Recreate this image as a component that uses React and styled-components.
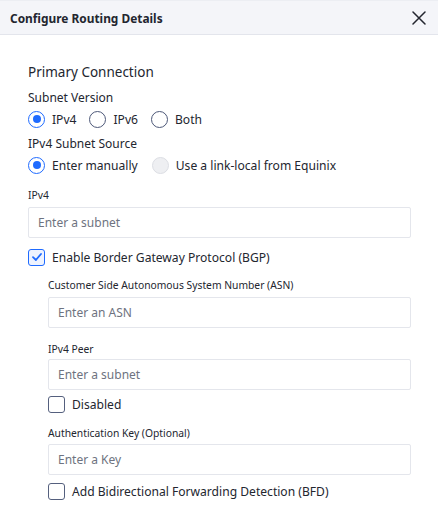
import React from "react";
import styled, { createGlobalStyle } from "styled-components";

const Global = createGlobalStyle`
  html, body { margin: 0; padding: 0; background: #fff; }
  body { font-family: "Noto Sans", "Open Sans", sans-serif; color: #23262f; }
  * { box-sizing: border-box; }
`;

const Panel = styled.div`
  width: 438px;
  height: 524px;
  background: #fff;
  overflow: hidden;
`;

const Header = styled.div`
  height: 35px;
  background: #f4f5f9;
  border-top: 1px solid #eceef3;
  border-bottom: 1px solid #e3e5ec;
  display: flex;
  align-items: center;
  justify-content: space-between;
  padding: 0 12px 0 10px;
`;

const Title = styled.h1`
  margin: 0;
  font-size: 11.9px;
  font-weight: 700;
  color: #23262f;
`;

const CloseButton = styled.button`
  border: 0;
  background: transparent;
  padding: 0;
  width: 15px;
  height: 15px;
  display: flex;
  align-items: center;
  justify-content: center;
  cursor: pointer;
`;

const Body = styled.div`
  padding: 27px 27px 0 28px;
  display: flex;
  flex-direction: column;
`;

const SectionTitle = styled.h2`
  margin: 0;
  font-size: 13.5px;
  font-weight: 400;
  line-height: 20px;
  color: #23262f;
`;

const GroupLabel = styled.div`
  font-size: 12px;
  line-height: 18px;
  margin-top: ${(p) => p.$mt || 0}px;
`;

const RadioRow = styled.div`
  display: flex;
  align-items: center;
  height: 20px;
  margin-top: 2px;
`;

const RadioItem = styled.label`
  display: flex;
  align-items: center;
  gap: 7px;
  font-size: 12.1px;
  margin-right: ${(p) => p.$mr || 0}px;
  color: #23262f;
`;

const RadioCircle = styled.span`
  width: 17px;
  height: 17px;
  border-radius: 50%;
  border: 1.6px solid
    ${(p) => (p.$checked ? "#1f6bff" : p.$disabled ? "#dcdee4" : "#4d5878")};
  background: ${(p) => (p.$disabled ? "#eeeff2" : "#fff")};
  display: flex;
  align-items: center;
  justify-content: center;
  flex: none;
  &::after {
    content: "";
    display: ${(p) => (p.$checked ? "block" : "none")};
    width: 8px;
    height: 8px;
    border-radius: 50%;
    background: #1f6bff;
  }
`;

const FieldLabel = styled.div`
  font-size: 10.3px;
  line-height: 16px;
  color: #23262f;
  margin-top: ${(p) => p.$mt || 0}px;
`;

const Input = styled.input`
  display: block;
  width: 100%;
  height: 31px;
  margin-top: ${(p) => p.$mt || 4}px;
  border: 1px solid #e4e6ec;
  border-radius: 2px;
  padding: 0 9px;
  font-family: "Noto Sans", "Open Sans", sans-serif;
  font-size: 12px;
  color: #23262f;
  background: #fff;
  outline: none;
  &::placeholder { color: #6e7380; }
`;

const CheckRow = styled.label`
  display: flex;
  align-items: center;
  gap: 7px;
  height: 20px;
  font-size: 12.1px;
  margin-top: ${(p) => p.$mt || 0}px;
`;

const Box = styled.span`
  width: 17px;
  height: 17px;
  border-radius: 3px;
  border: 1.6px solid ${(p) => (p.$checked ? "#1f6bff" : "#55607e")};
  background: ${(p) => (p.$checked ? "#eef3ff" : "#fff")};
  display: flex;
  align-items: center;
  justify-content: center;
  flex: none;
`;

const Indent = styled.div`
  padding-left: 20px;
  display: flex;
  flex-direction: column;
`;

const Check = () => (
  <svg width="12" height="12" viewBox="0 0 12 12" fill="none">
    <path d="M2 6.2 L4.9 9 L10 3" stroke="#1f6bff" strokeWidth="1.8" strokeLinecap="round" strokeLinejoin="round" />
  </svg>
);

const Radio = ({ checked, disabled, label, mr }) => (
  <RadioItem $mr={mr}>
    <RadioCircle $checked={checked} $disabled={disabled} />
    {label}
  </RadioItem>
);

const CheckBox = ({ checked, label, mt }) => (
  <CheckRow $mt={mt}>
    <Box $checked={checked}>{checked && <Check />}</Box>
    {label}
  </CheckRow>
);

export default function App() {
  return (
    <Panel>
      <Global />
      <Header>
        <Title>Configure Routing Details</Title>
        <CloseButton aria-label="Close">
          <svg width="14" height="14" viewBox="0 0 14 14">
            <path d="M1 1 L13 13 M13 1 L1 13" stroke="#23262f" strokeWidth="1.5" strokeLinecap="round" />
          </svg>
        </CloseButton>
      </Header>
      <Body>
        <SectionTitle>Primary Connection</SectionTitle>
        <GroupLabel $mt={7}>Subnet Version</GroupLabel>
        <RadioRow>
          <Radio checked label="IPv4" mr={13} />
          <Radio label="IPv6" mr={13} />
          <Radio label="Both" />
        </RadioRow>
        <GroupLabel $mt={6}>IPv4 Subnet Source</GroupLabel>
        <RadioRow>
          <Radio checked label="Enter manually" mr={14} />
          <Radio disabled label="Use a link-local from Equinix" />
        </RadioRow>
        <FieldLabel $mt={12}>IPv4</FieldLabel>
        <Input placeholder="Enter a subnet" />
        <CheckBox checked label="Enable Border Gateway Protocol (BGP)" mt={9} />
        <Indent>
          <FieldLabel $mt={10}>Customer Side Autonomous System Number (ASN)</FieldLabel>
          <Input placeholder="Enter an ASN" $mt={4} />
          <FieldLabel $mt={13}>IPv4 Peer</FieldLabel>
          <Input placeholder="Enter a subnet" $mt={2} />
          <CheckBox label="Disabled" mt={4} />
          <FieldLabel $mt={11}>Authentication Key (Optional)</FieldLabel>
          <Input placeholder="Enter a Key" $mt={3} />
          <CheckBox label="Add Bidirectional Forwarding Detection (BFD)" mt={6} />
        </Indent>
      </Body>
    </Panel>
  );
}
